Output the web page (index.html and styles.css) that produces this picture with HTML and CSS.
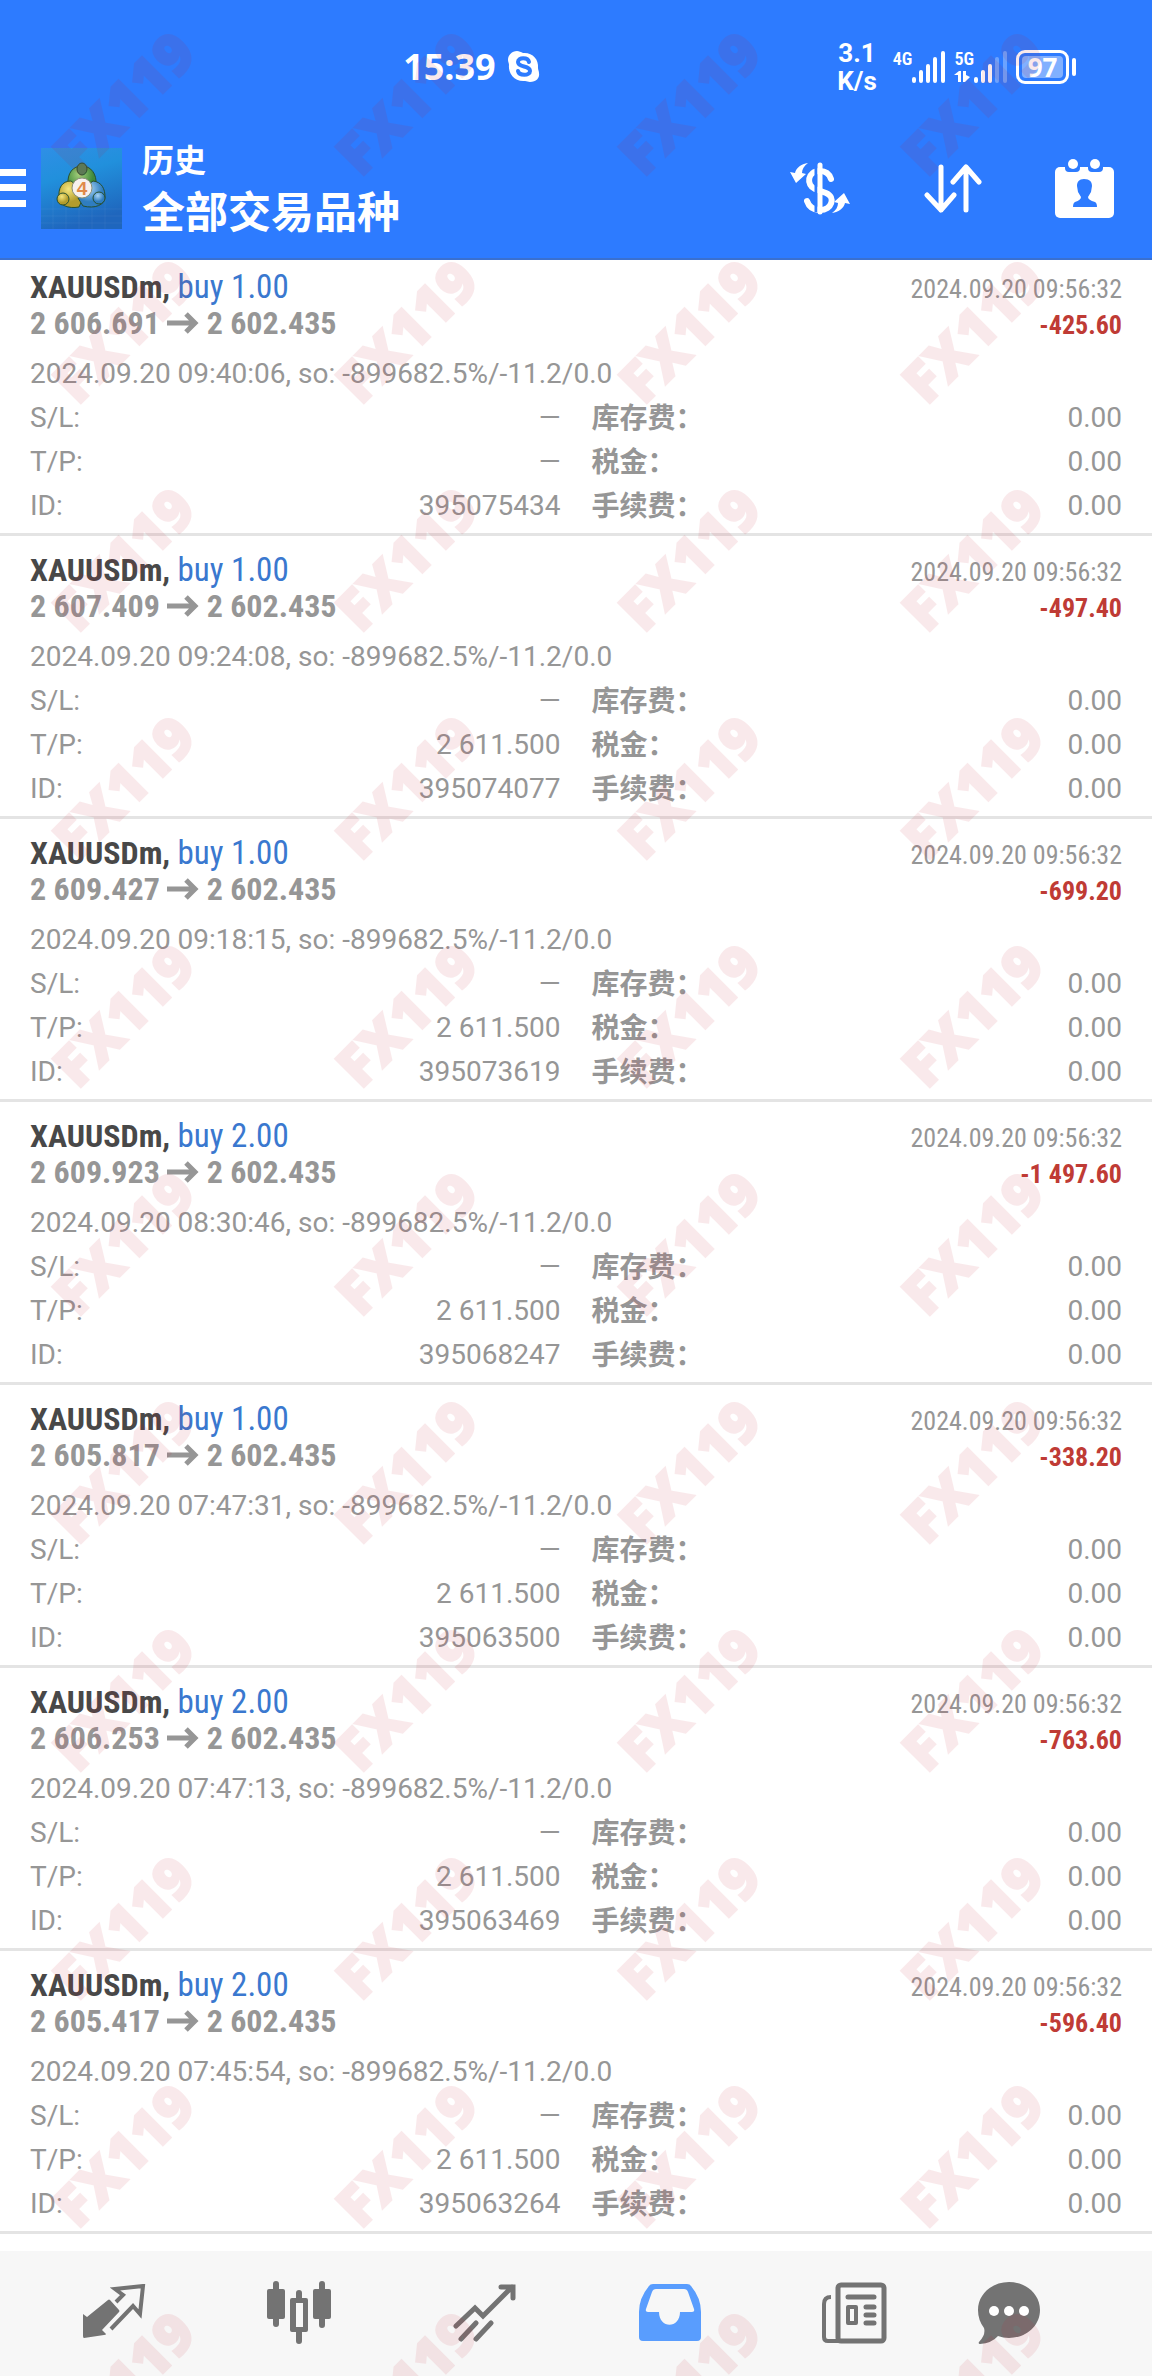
FILE: index.html
```
<!DOCTYPE html>
<html lang="zh-CN">
<head>
    <meta charset="UTF-8">
    <meta name="viewport" content="width=device-width, initial-scale=1.0">
    <title>历史</title>
    <link rel="stylesheet" href="styles.css">
</head>
<body>
    <header class="header">
        <div class="status-bar">
            <div class="status-left">
                <span class="clock">15:39</span>
                <svg width="32" height="32" viewBox="0 0 32 32">
                    <path d="M9 0C4 0 0 4 0 9c0 2 1 3 1 5-1 9 6 17 16 16 2 0 3 1 5 1 6 0 10-4 9-9 0-2-1-3-1-5C31 8 24 1 15 2 13 1 11 0 9 0z" fill="#fff"/>
                    <path d="M21 11c-1-5-11-5-11 0 0 6 12 3 12 9 0 5-11 5-12 0" fill="none" stroke="#2d7bff" stroke-width="4" stroke-linecap="round"/>
                </svg>
            </div>
            <div class="status-right">
                <div class="speed"><span>3.1</span><span>K/s</span></div>
                <div class="signal">
                    <span class="network">4G</span>
                    <svg width="34" height="32" viewBox="0 0 34 32" stroke="#fff" stroke-width="4" stroke-linecap="round">
                        <path d="M2 28v2M9 21v9M16 15v15M23 8v22M31 2v28"/>
                    </svg>
                </div>
                <div class="signal">
                    <div class="network-box">
                        <span class="network">5G</span>
                        <svg width="16" height="11" viewBox="0 0 16 11" fill="#fff">
                            <path d="M0 4L5 0h2v11H4V4zM9 0h3v4l4 2-5 5H9z"/>
                        </svg>
                    </div>
                    <svg width="34" height="32" viewBox="0 0 34 32" stroke="#fff" stroke-width="4" stroke-linecap="round">
                        <path d="M2 28v2M9 21v9M16 15v15"/>
                        <path d="M23 8v22M31 2v28" opacity="0.3"/>
                    </svg>
                </div>
                <div class="battery"><span class="battery-level">97</span></div>
            </div>
        </div>
        <div class="app-bar">
            <button class="icon-button" aria-label="菜单">
                <svg width="26" height="38" viewBox="0 0 26 38" fill="#fff">
                    <path d="M0 0h26v7H0zM0 15h26v7H0zM0 31h26v7H0z"/>
                </svg>
            </button>
            <svg class="logo" width="81" height="81" viewBox="0 0 81 81">
                <defs>
                    <linearGradient id="logoBg" x1="0" y1="0" x2="0.3" y2="1">
                        <stop offset="0" stop-color="#2f8fe6"/>
                        <stop offset="0.4" stop-color="#2190dc"/>
                        <stop offset="1" stop-color="#1f66bd"/>
                    </linearGradient>
                    <radialGradient id="green" cx="0.4" cy="0.3"><stop offset="0" stop-color="#a5cf7c"/><stop offset="1" stop-color="#3f8a3a"/></radialGradient>
                    <radialGradient id="yellow" cx="0.4" cy="0.3"><stop offset="0" stop-color="#f4e67e"/><stop offset="1" stop-color="#b39c2c"/></radialGradient>
                    <radialGradient id="blue" cx="0.4" cy="0.3"><stop offset="0" stop-color="#a9d5f5"/><stop offset="1" stop-color="#2f7dc0"/></radialGradient>
                </defs>
                <rect width="81" height="81" fill="url(#logoBg)"/>
                <path d="M0 61h81M0 68h81M0 75h81M12 50v31M25 50v31M38 50v31M51 50v31M64 50v31" stroke="#fff" stroke-opacity="0.05"/>
                <g stroke="#28502f" stroke-width="1">
                    <path d="M27 37C26 25 32 18 41 18s15 8 14 19l-8 9H35z" fill="url(#green)"/>
                    <path d="M30 33c-9 0-13 7-12 17 0 7 9 11 20 9l4-9-3-10z" fill="url(#yellow)"/>
                    <path d="M52 33c9 1 12 8 12 16s-10 12-22 9l-5-8 7-11z" fill="url(#blue)"/>
                    <ellipse cx="41" cy="21" rx="5" ry="6" fill="#52835a"/>
                    <circle cx="22" cy="51" r="6" fill="url(#yellow)"/>
                    <circle cx="58" cy="50" r="6" fill="url(#blue)"/>
                </g>
                <circle cx="41" cy="40" r="10" fill="#f7f1ee" stroke="#8b9079"/>
                <text class="logo-text" x="41" y="47" text-anchor="middle">4</text>
            </svg>
            <div class="titles">
                <h1>历史</h1>
                <p>全部交易品种</p>
            </div>
            <div class="actions">
                <button class="icon-button" aria-label="货币">
                    <svg width="63" height="53" viewBox="0 0 63 53">
                        <path d="M42 17c-2-6-6-8-11-8-13 0-14 14-5 18l11 4c10 4 6 17-6 17-6 0-11-3-13-9" fill="none" stroke="#fff" stroke-width="6" stroke-linecap="round"/>
                        <path d="M27 4v46" stroke="#2d7bff" stroke-width="3"/>
                        <path d="M31 3v47" stroke="#fff" stroke-width="5" stroke-linecap="round"/>
                        <path id="swap" d="M19 1c-4 3-6 6-6 10l4 1L7 21 1 10l5 1c1-5 6-9 13-10z" fill="#fff"/>
                        <use href="#swap" transform="rotate(180 31 26)"/>
                    </svg>
                </button>
                <button class="icon-button" aria-label="排序">
                    <svg width="58" height="49" viewBox="0 0 58 49" fill="none" stroke="#fff" stroke-width="5" stroke-linecap="round" stroke-linejoin="round">
                        <path d="M17 3v43M3 31l14 15 13-15M42 46V3M29 18L42 3l13 15"/>
                    </svg>
                </button>
                <button class="icon-button" aria-label="日期">
                    <svg width="62" height="61" viewBox="0 0 62 61" fill="#fff">
                        <rect x="1" y="9" width="59" height="51" rx="5"/>
                        <path d="M11 8h15v2q0 4-4 4h-7q-4 0-4-4zM34 8h15v2q0 4-4 4h-7q-4 0-4-4z" fill="#2d7bff"/>
                        <circle cx="19" cy="6" r="5"/>
                        <circle cx="41" cy="6" r="5"/>
                        <path d="M30 21c6 0 8 3 8 7l-1 6-3 5q0 3 7 5 2 1 2 5H19q0-4 2-5 6-2 6-5l-3-5-1-6c0-4 2-7 7-7z" fill="#2d7bff"/>
                    </svg>
                </button>
            </div>
        </div>
    </header>

    <main class="history" id="history">
    </main>

    <nav class="tab-bar">
        <button class="tab" aria-label="行情">
            <svg width="64" height="58" viewBox="0 0 64 58">
                <path d="M26 16q1-1 2 0l9 10q1 1 0 2L20 46l4 4q0 1-2 1L2 54q-1 0-1-2V30l4 3z" fill="#737373"/>
                <path d="M34 18l7-7-8-6 28-3-3 28-7-8-22 23" fill="none" stroke="#737373" stroke-width="4"/>
            </svg>
        </button>
        <button class="tab" aria-label="图表">
            <svg width="66" height="66" viewBox="0 0 66 66" fill="#737373">
                <rect x="1" y="9" width="18" height="30" rx="2"/>
                <rect x="47" y="9" width="18" height="30" rx="2"/>
                <path d="M26 18h14q2 0 2 2v30q0 2-2 2H26q-2 0-2-2V20q0-2 2-2zM30 23v24h7V23z" fill-rule="evenodd"/>
                <path d="M10 4v40M56 4v41M33 13v6M33 51v10" stroke="#737373" stroke-width="6" stroke-linecap="round"/>
            </svg>
        </button>
        <button class="tab" aria-label="交易">
            <svg width="63" height="60" viewBox="0 0 63 60" fill="none" stroke="#737373" stroke-width="5" stroke-linecap="round">
                <path d="M3 43l19-18 8 8L59 4M48 4h12v11M8 56l15-16M23 56l15-16"/>
            </svg>
        </button>
        <button class="tab" aria-label="历史">
            <svg width="62" height="57" viewBox="0 0 62 57" fill="#599dfe">
                <path d="M14 0h34q3 0 4 2 10 12 10 26v25q0 4-4 4H4q-4 0-4-4V28Q0 14 10 2q1-2 4-2zM17 5q-3 0-4 3L7 25q-1 3 2 3h11c0 17 21 17 21 0h12q3 0 2-3L49 8q-1-3-4-3z" fill-rule="evenodd"/>
            </svg>
        </button>
        <button class="tab" aria-label="新闻">
            <svg width="66" height="62" viewBox="0 0 66 62">
                <path d="M9 15q-7 0-7 7v33q0 4 4 4h12" fill="none" stroke="#737373" stroke-width="4"/>
                <rect x="16" y="3" width="46" height="56" rx="3" fill="none" stroke="#737373" stroke-width="5"/>
                <path d="M26 15h26M44 25h8M44 33h8M44 41h8" stroke="#737373" stroke-width="5" stroke-linecap="round"/>
                <rect x="26" y="25" width="8" height="16" fill="none" stroke="#737373" stroke-width="4" stroke-linejoin="round"/>
            </svg>
        </button>
        <button class="tab" aria-label="消息">
            <svg width="62" height="62" viewBox="0 0 62 62">
                <path d="M31 0C48 0 62 12 62 28S48 56 31 56q-6 0-11-2-6 7-18 8-2 0-1-2 7-7 5-14Q0 38 0 28C0 12 14 0 31 0z" fill="#737373"/>
                <circle cx="16" cy="29" r="5" fill="#fff"/>
                <circle cx="31" cy="29" r="5" fill="#fff"/>
                <circle cx="46" cy="29" r="5" fill="#fff"/>
            </svg>
        </button>
    </nav>

    <div class="watermark" id="watermark" aria-hidden="true"></div>

    <script>
        const closePrice = '2 602.435';
        const closeTime = '2024.09.20 09:56:32';
        const trades = [
            { volume: '1.00', open: '2 606.691', time: '09:40:06', profit: '-425.60', tp: '—', id: '395075434' },
            { volume: '1.00', open: '2 607.409', time: '09:24:08', profit: '-497.40', tp: '2 611.500', id: '395074077' },
            { volume: '1.00', open: '2 609.427', time: '09:18:15', profit: '-699.20', tp: '2 611.500', id: '395073619' },
            { volume: '2.00', open: '2 609.923', time: '08:30:46', profit: '-1 497.60', tp: '2 611.500', id: '395068247' },
            { volume: '1.00', open: '2 605.817', time: '07:47:31', profit: '-338.20', tp: '2 611.500', id: '395063500' },
            { volume: '2.00', open: '2 606.253', time: '07:47:13', profit: '-763.60', tp: '2 611.500', id: '395063469' },
            { volume: '2.00', open: '2 605.417', time: '07:45:54', profit: '-596.40', tp: '2 611.500', id: '395063264' }
        ];

        const arrow = `<svg class="arrow" width="32" height="22" viewBox="0 0 32 22" fill="none" stroke="#969696" stroke-width="5"><path d="M0 11h28M19 2l9 9-9 9"/></svg>`;

        document.getElementById('history').innerHTML = trades.map(trade => `
            <article class="trade">
                <div class="trade-row">
                    <h2 class="symbol">XAUUSDm, <span class="side">buy ${trade.volume}</span></h2>
                    <span class="close-time">${closeTime}</span>
                </div>
                <div class="trade-row">
                    <span class="prices">${trade.open} ${arrow} ${closePrice}</span>
                    <span class="profit">${trade.profit}</span>
                </div>
                <p class="comment">2024.09.20 ${trade.time}, so: -899682.5%/-11.2/0.0</p>
                <dl class="details">
                    <div><dt>S/L:</dt><dd>—</dd></div>
                    <div><dt>库存费：</dt><dd>0.00</dd></div>
                    <div><dt>T/P:</dt><dd>${trade.tp}</dd></div>
                    <div><dt>税金：</dt><dd>0.00</dd></div>
                    <div><dt>ID:</dt><dd>${trade.id}</dd></div>
                    <div><dt>手续费：</dt><dd>0.00</dd></div>
                </dl>
            </article>`).join('');

        // 4 columns of marks, 11 rows
        document.getElementById('watermark').innerHTML = '<div><span>FX119</span></div>'.repeat(44);
    </script>
</body>
</html>
```
FILE: styles.css
```
* {
    box-sizing: border-box;
}
body {
    position: relative;
    display: flex;
    flex-direction: column;
    min-height: 100vh;
    margin: 0;
    overflow-x: hidden;
    background-color: #fff;
    color: #969696;
    font-family: Roboto, "Noto Sans CJK SC", sans-serif;
    font-size: 28px;
}
h1, h2, p, dl, dd {
    margin: 0;
}
button {
    padding: 0;
    border: none;
    background: none;
    cursor: pointer;
}
svg {
    display: block;
    flex: none;
}

/* Header */
.header {
    position: relative;
    z-index: 1;
    padding-bottom: 16px;
    border-bottom: 2px solid #3a70cf;
    background-color: #2d7bff;
    color: #fff;
}
.status-bar {
    display: flex;
    align-items: center;
    justify-content: space-between;
    height: 134px;
    padding: 0 76px 0 35%;
}
.status-left {
    display: flex;
    align-items: center;
    gap: 12px;
}
.clock {
    font-family: "Noto Sans", sans-serif;
    font-size: 36px;
    font-weight: 700;
    line-height: 36px;
}
.status-right {
    display: flex;
    align-items: center;
    gap: 8px;
}
.speed {
    display: flex;
    flex-direction: column;
    align-items: center;
    margin-right: 8px;
    font-family: Roboto, sans-serif;
    font-size: 26px;
    font-weight: 700;
    line-height: 28px;
}
.signal {
    display: flex;
    align-items: flex-start;
}
.network-box {
    display: flex;
    flex-direction: column;
    gap: 4px;
}
.network {
    font-family: "Roboto Condensed", sans-serif;
    font-size: 18px;
    font-weight: 600;
    line-height: 16px;
}
.battery {
    position: relative;
    width: 53px;
    height: 34px;
    margin-right: 7px;
    padding: 3px;
    border: 3px solid #fff;
    border-radius: 9px;
}
.battery::after {
    content: "";
    position: absolute;
    top: 5px;
    right: -10px;
    width: 4px;
    height: 18px;
    border-radius: 2px;
    background-color: #fff;
}
.battery-level {
    display: block;
    border-radius: 4px;
    background-color: #81b0ff;
    font-family: "Noto Sans", sans-serif;
    font-size: 26px;
    font-weight: 700;
    line-height: 22px;
    text-align: center;
}
.app-bar {
    display: flex;
    align-items: center;
    height: 108px;
    padding-right: 36px;
}
.logo {
    margin: 0 20px 0 15px;
}
.logo-text {
    fill: #e08a4a;
    font-family: "Liberation Sans", sans-serif;
    font-size: 19px;
    font-weight: 700;
}
.titles {
    flex: 1;
    padding-bottom: 4px;
    font-family: "Noto Sans CJK SC", sans-serif;
}
.titles h1 {
    font-size: 32px;
    font-weight: 700;
    line-height: 46px;
}
.titles p {
    font-size: 43px;
    font-weight: 700;
    line-height: 56px;
}
.actions {
    display: flex;
    align-items: center;
    gap: 72px;
}

/* Trade list, first card is scrolled slightly under the header */
.history {
    flex: 1;
    margin-top: -7px;
    padding-bottom: 17px;
}
.trade {
    padding: 15px 30px 5px;
    border-bottom: 3px solid #e4e4e4;
}
.trade-row {
    display: flex;
    align-items: baseline;
    justify-content: space-between;
    height: 37px;
    font-family: "Roboto Condensed", Roboto, sans-serif;
    font-size: 26px;
    line-height: 37px;
}
.symbol {
    color: #484848;
    font-size: 32px;
    font-weight: 700;
}
.side {
    color: #3a78cf;
    font-size: 33px;
    font-weight: 400;
}
.prices {
    font-size: 32px;
    font-weight: 700;
}
.arrow {
    display: inline-block;
}
.profit {
    color: #bf3b35;
    font-weight: 700;
}
.comment {
    margin-top: 10px;
    line-height: 44px;
}
.details {
    display: grid;
    grid-template-columns: 1fr 1fr;
    column-gap: 31px;
    line-height: 44px;
}
.details div {
    display: flex;
    justify-content: space-between;
    height: 44px;
}
.details div:nth-child(even) dt {
    font-family: "Noto Sans CJK SC", sans-serif;
    font-weight: 700;
    line-height: 40px;
}

/* Bottom navigation */
.tab-bar {
    display: flex;
    height: 125px;
    padding: 0 81px 2px 21px;
    background-color: #f7f7f7;
}
.tab {
    display: flex;
    flex: 3;
    align-items: center;
    justify-content: center;
}
.tab:last-child {
    flex: 2;
}

.watermark {
    position: absolute;
    inset: 0;
    z-index: 2;
    display: grid;
    grid-template-columns: repeat(4, 283px);
    grid-auto-rows: 228px;
    overflow: hidden;
    color: #c9192d;
    font-family: "Open Sans", sans-serif;
    font-size: 57px;
    font-weight: 800;
    opacity: 0.09;
    pointer-events: none;
    -webkit-text-stroke: 2px #c9192d;
}
.watermark div {
    display: flex;
    align-items: center;
    justify-content: center;
    margin: -12px 18px 12px -18px;
}
.watermark span {
    line-height: 56px;
    transform: rotate(-45deg);
}
```
